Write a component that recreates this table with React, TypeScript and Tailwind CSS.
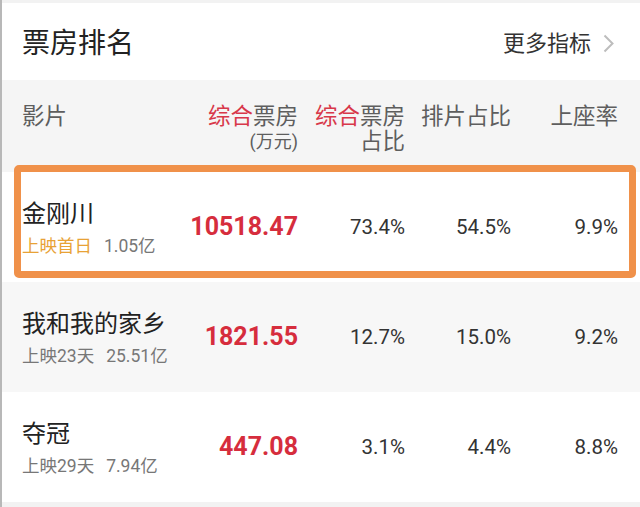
const font = { fontFamily: 'Roboto, "Noto Sans CJK SC", sans-serif' };

type Film = {
  name: string;
  tag?: string;
  days: string;
  total: string;
  box: string;
  share: string;
  screen: string;
  seat: string;
};

const films: Film[] = [
  { name: "金刚川", tag: "上映首日", days: "", total: "1.05亿", box: "10518.47", share: "73.4%", screen: "54.5%", seat: "9.9%" },
  { name: "我和我的家乡", days: "上映23天", total: "25.51亿", box: "1821.55", share: "12.7%", screen: "15.0%", seat: "9.2%" },
  { name: "夺冠", days: "上映29天", total: "7.94亿", box: "447.08", share: "3.1%", screen: "4.4%", seat: "8.8%" },
];

const cols = "grid grid-cols-[168px_108px_107px_106px_107px] items-center";

function FilmRow({ film, index }: { film: Film; index: number }) {
  const bg = index % 2 === 1 ? "bg-[#f7f7f7]" : "bg-white";
  return (
    <div className={`relative h-[110px] px-[20px] ${bg}`}>
      {index === 0 && (
        <div className="absolute left-[12px] right-[4px] top-[-7px] h-[113px] rounded-[5px] border-[7px] border-[#f0914a] bg-white" />
      )}
      <div className={`relative h-full ${cols}`}>
        <div className="pt-[2px]">
          <div className="text-[24px] leading-[32px] text-[#222]">{film.name}</div>
          <div className="mt-[3px] flex items-center gap-[12px] text-[17.5px] leading-[26px] text-[#777]">
            {film.tag ? (
              <span className="text-[#e8a236]">{film.tag}</span>
            ) : (
              <span>{film.days}</span>
            )}
            <span>{film.total}</span>
          </div>
        </div>
        <div className="text-right text-[25px] font-bold text-[#d62d3d]">{film.box}</div>
        <div className="text-right text-[20.5px] text-[#333]">{film.share}</div>
        <div className="text-right text-[20.5px] text-[#333]">{film.screen}</div>
        <div className="text-right text-[20.5px] text-[#333]">{film.seat}</div>
      </div>
    </div>
  );
}

export default function App() {
  return (
    <div style={font} className="h-[507px] w-[640px] overflow-hidden border-l-2 border-[#b8b8b8] bg-[#f2f2f2] pt-[3px]">
      <div className="flex h-[77px] items-center justify-between bg-white pl-[20px] pr-[26px] pt-[4px]">
        <h1 className="text-[28px] text-[#222]">票房排名</h1>
        <div className="flex items-center gap-[12px] text-[22px] text-[#333]">
          <span>更多指标</span>
          <svg width="11" height="19" viewBox="0 0 11 19" fill="none">
            <polyline points="1.5,1.5 9.5,9.5 1.5,17.5" stroke="#bdbdbd" strokeWidth="2" />
          </svg>
        </div>
      </div>

      <div className={`h-[92px] bg-[#f5f5f5] px-[20px] pt-[24px] text-[22.5px] leading-[25px] text-[#5e5e5e] ${cols} items-start`}>
        <div>影片</div>
        <div className="text-right">
          <div>
            <span className="text-[#d8384a]">综合</span>票房
          </div>
          <div className="text-[18px]">(万元)</div>
        </div>
        <div className="text-right">
          <div>
            <span className="text-[#d8384a]">综合</span>票房
          </div>
          <div>占比</div>
        </div>
        <div className="text-right">排片占比</div>
        <div className="text-right">上座率</div>
      </div>

      {films.map((film, i) => (
        <FilmRow key={film.name} film={film} index={i} />
      ))}
    </div>
  );
}
